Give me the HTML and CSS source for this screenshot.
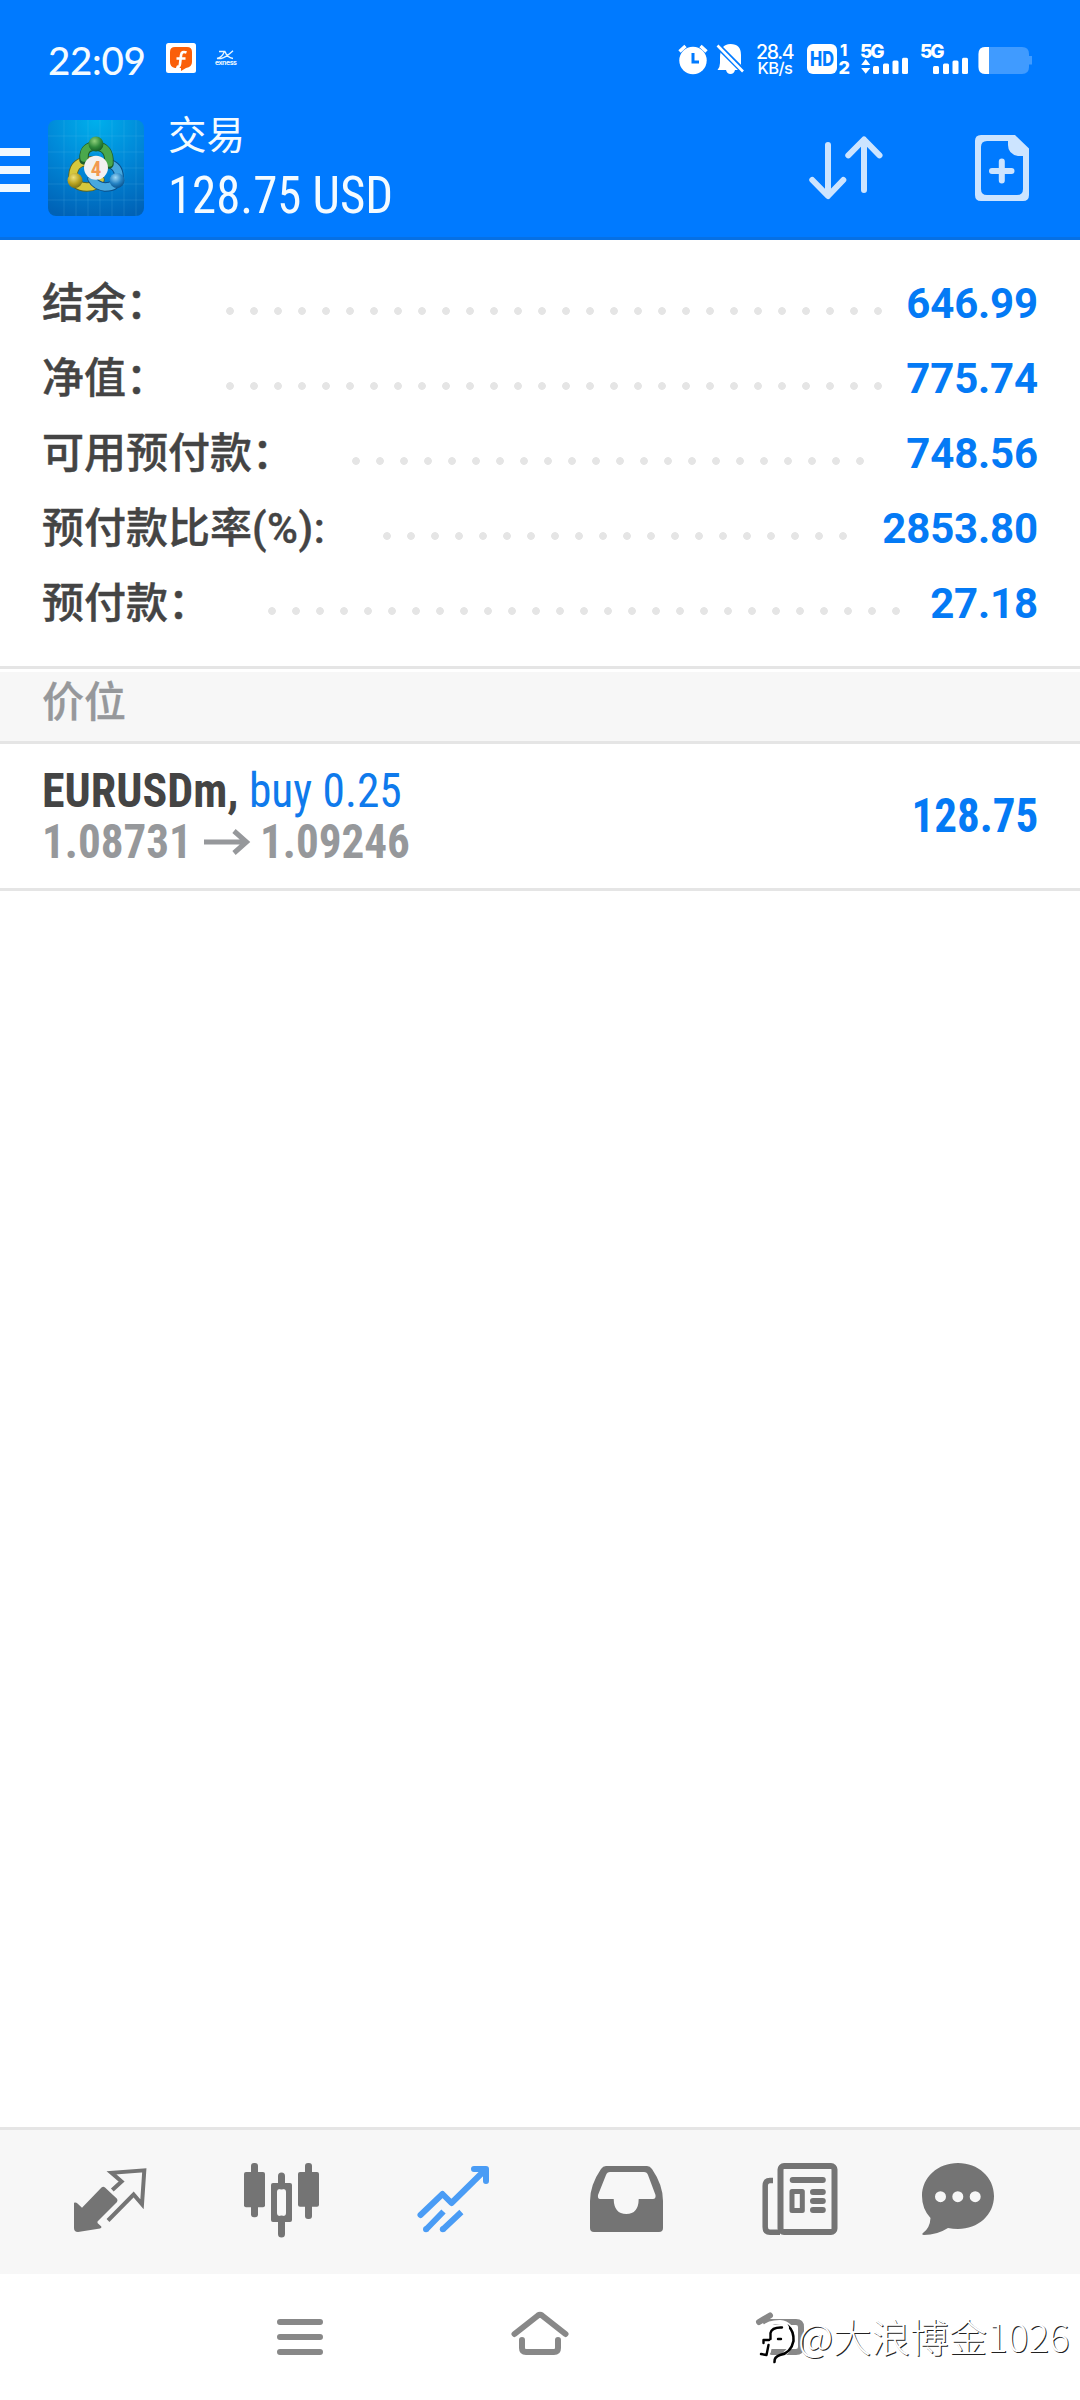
FILE: index.html
```
<!DOCTYPE html>
<html lang="zh-CN">
<head>
<meta charset="utf-8">
<title>交易</title>
<link rel="stylesheet" href="styles.css">
</head>
<body>
<div class="screen">
  <header class="header">
    <div class="status">
      <span class="clock">22:09</span>
      <svg class="app-badge" width="30" height="30" viewBox="0 0 30 30">
        <rect width="30" height="30" rx="2.500" fill="#fff"/>
        <path d="M9 4H21Q26 4 26 9V19Q26 24 20 25L15 28V25H9Q4 24 4 19V9Q4 4 9 4Z" fill="#fa5f0a"/>
        <path d="M20.500 9.500Q15.500 7.500 15 12.500L14 21Q13.500 25 10.500 23.500M10.500 15.500H19.500" fill="none" stroke="#fff" stroke-width="2.600"/>
      </svg>
      <svg class="exness" width="24" height="18" viewBox="0 0 24 18">
        <path d="M5 1.500H10.500Q8 7.500 3 8.500H7Q12 7.500 19 .8M11 1.500Q13 7.500 19 8.500" fill="none" stroke="#e8f6ff" stroke-width="1.300"/>
        <text x="1" y="15" textLength="22" class="exness-text">exness</text>
      </svg>
      <div class="status-icons">
        <svg width="38" height="36" viewBox="676 42 38 36" fill="#fff">
          <circle cx="693" cy="60.500" r="13.700"/>
          <path d="M679.500 51.500L685.500 46M706.500 51.500L700.500 46" stroke="#fff" stroke-width="3.400"/>
          <path d="M693 53V62H699" fill="none" stroke="#007aff" stroke-width="3"/>
        </svg>
        <svg width="38" height="36" viewBox="714 42 38 36">
          <path d="M720 58Q720 44 730.500 44Q741 44 741 55V65L744 70H735Q734 74 730.500 74Q727 74 726 70H717.500Q720 67 720 63Z" fill="#fff"/>
          <path d="M716.500 44.500L744 72" stroke="#007aff" stroke-width="6"/>
          <path d="M717.500 45.500L743 71.500" stroke="#fff" stroke-width="2.600"/>
        </svg>
        <svg width="50" height="36" viewBox="752 42 50 36" fill="#fff" class="net">
          <text x="756" y="58.500" font-size="19.500" textLength="38.500">28.4</text>
          <text x="757.500" y="74.300" font-size="16.500" textLength="35.500">KB/s</text>
        </svg>
        <svg width="54" height="36" viewBox="802 42 54 36" class="hd">
          <rect x="807" y="44" width="30" height="30" rx="6" fill="#fff"/>
          <text x="810" y="66" font-size="19.500" textLength="24" lengthAdjust="spacingAndGlyphs" fill="#007aff">HD</text>
          <text x="840" y="56" font-size="16.500" fill="#fff">1</text>
          <text x="838.500" y="73.800" font-size="18" fill="#fff">2</text>
        </svg>
        <svg width="60" height="36" viewBox="856 42 60 36" fill="#fff" class="hd">
          <text x="860" y="58" font-size="19" textLength="24.500">5G</text>
          <path d="M865.700 59L870.300 65H861.200ZM865.700 73.800L870.300 68H861.200Z"/>
          <rect x="873" y="66" width="6" height="8" rx="1.500"/><rect x="883" y="63.500" width="6" height="10.500" rx="1.500"/>
          <rect x="892.500" y="60.500" width="6" height="13.500" rx="1.500"/><rect x="902" y="57.700" width="6" height="16.300" rx="1.500"/>
        </svg>
        <svg width="58" height="36" viewBox="916 42 58 36" fill="#fff" class="hd">
          <text x="920" y="58" font-size="19" textLength="24.500">5G</text>
          <rect x="933" y="66" width="6" height="8" rx="1.500"/><rect x="943" y="63.500" width="6" height="10.500" rx="1.500"/>
          <rect x="952.500" y="60.500" width="6" height="13.500" rx="1.500"/><rect x="962" y="57.700" width="6" height="16.300" rx="1.500"/>
        </svg>
        <svg width="60" height="36" viewBox="974 42 60 36">
          <path d="M985 47H1022Q1029 47 1029 54V56H1032V64.500H1029V67Q1029 74 1022 74H985Q978.500 74 978.500 67V54Q978.500 47 985 47Z" fill="#409bff"/>
          <path d="M989 47V74H985Q978.500 74 978.500 67V54Q978.500 47 985 47Z" fill="#fff"/>
        </svg>
      </div>
    </div>
    <div class="appbar">
      <div class="menu"><i></i><i></i><i></i></div>
      <svg class="logo" width="96" height="96" viewBox="0 0 96 96">
        <defs>
          <radialGradient id="bg" cx=".5" cy="0" r="1.050"><stop offset="0" stop-color="#00b0ec"/><stop offset=".5" stop-color="#0088d8"/><stop offset="1" stop-color="#0062b6"/></radialGradient>
          <radialGradient id="gr" cx=".4" cy=".3" r=".7"><stop offset="0" stop-color="#8fd07a"/><stop offset=".6" stop-color="#2f8a3c"/><stop offset="1" stop-color="#176028"/></radialGradient>
          <radialGradient id="ye" cx=".4" cy=".3" r=".7"><stop offset="0" stop-color="#f0e27a"/><stop offset=".6" stop-color="#b8a220"/><stop offset="1" stop-color="#7d7418"/></radialGradient>
          <radialGradient id="bl" cx=".4" cy=".3" r=".7"><stop offset="0" stop-color="#9fd8f5"/><stop offset=".6" stop-color="#2583c4"/><stop offset="1" stop-color="#0c5590"/></radialGradient>
        </defs>
        <rect width="96" height="96" rx="8" fill="url(#bg)"/>
        <path d="M16 0V96M28 0V96M40 0V96M52 0V96M64 0V96M76 0V96M88 0V96M0 16H96M0 32H96M0 48H96M0 64H96M0 80H96" stroke="#6fd0f5" stroke-opacity=".16"/>
        <g fill="none" stroke-linecap="round">
          <path d="M44 41Q26 40 25 55Q26 67 39 67Q49 67 52 60" stroke="#5c6420" stroke-width="9.500"/>
          <path d="M44 41Q26 40 25 55Q26 67 39 67Q49 67 52 60" stroke="#d6c83c" stroke-width="7.500"/>
          <path d="M60 43Q71 46 71 57Q69 67 57 67Q48 66 44 59" stroke="#0b4f88" stroke-width="9.500"/>
          <path d="M60 43Q71 46 71 57Q69 67 57 67Q48 66 44 59" stroke="#48a8de" stroke-width="7.500"/>
          <path d="M36 40Q35 26 48 26Q62 27 61 44" stroke="#1d5c2a" stroke-width="9.500"/>
          <path d="M36 38Q35 26 48 26Q62 27 61 43" stroke="#4aa84c" stroke-width="7.500"/>
        </g>
        <circle cx="48" cy="24" r="7.500" fill="url(#gr)"/>
        <circle cx="27" cy="60.500" r="7.500" fill="url(#ye)"/>
        <circle cx="69" cy="60.500" r="7.500" fill="url(#bl)"/>
        <circle cx="48" cy="47.700" r="12" fill="#f3f1f1"/>
        <text x="48" y="55.500" class="logo-num">4</text>
      </svg>
      <div class="titles">
        <div class="title">交易</div>
        <div class="total">128.75 USD</div>
      </div>
      <svg class="sort" width="84" height="84" viewBox="804 126 84 84" fill="none" stroke="#cce4ff" stroke-width="6" stroke-linecap="round" stroke-linejoin="round">
        <path d="M828 145V195M812.300 180L828 196L843.300 180M864 190V140M848.300 155.300L864 139.500L879.500 155.300"/>
      </svg>
      <svg class="new-order" width="60" height="72" viewBox="972 132 60 72">
        <path fill="#cce4ff" fill-rule="evenodd" d="M981 135H1015L1029 148.500V195Q1029 201 1023 201H981Q975 201 975 195V141Q975 135 981 135ZM987 141Q981 141 981 147V189Q981 195 987 195H1017Q1023 195 1023 189V156H1018Q1008 154 1008 145V141Z"/>
        <path d="M992 171H1011.500M1001.800 161.500V180.500" stroke="#cce4ff" stroke-width="6" stroke-linecap="round"/>
      </svg>
    </div>
  </header>

  <section class="summary">
    <div class="row"><span class="label">结余：</span><span class="dots" style="width:672px"></span><span class="num">646.99</span></div>
    <div class="row"><span class="label">净值：</span><span class="dots" style="width:672px"></span><span class="num">775.74</span></div>
    <div class="row"><span class="label">可用预付款：</span><span class="dots" style="width:528px"></span><span class="num">748.56</span></div>
    <div class="row"><span class="label">预付款比率<span class="unit">(%):</span></span><span class="dots" style="width:480px"></span><span class="num">2853.80</span></div>
    <div class="row"><span class="label">预付款：</span><span class="dots" style="width:648px"></span><span class="num">27.18</span></div>
  </section>

  <h2 class="section">价位</h2>

  <main class="positions">
    <div class="position">
      <div>
        <div class="line"><b class="symbol">EURUSDm,</b><span class="side">buy 0.25</span></div>
        <div class="line prices"><b>1.08731</b>
          <svg width="48" height="28" viewBox="0 0 48 28" fill="none" stroke="#96989b" stroke-width="5"><path d="M0 14H43M30 3L42.500 14L30 25"/></svg>
          <b>1.09246</b></div>
      </div>
      <b class="profit">128.75</b>
    </div>
  </main>

  <nav class="tabs">
    <svg viewBox="0 0 100 100" fill="#747474">
      <path d="M14 50.700Q16 50 17.500 51.500L22 55.700L41.500 35.500Q43.300 34 45 35.500L57 46.800Q58 48.300 57 50L37.500 69.500V71L41.300 74.500Q42 76 40 76.500L18 80Q14 80 14 76Z"/>
      <path d="M52.300 38L61.600 29.500L51.500 20.800L84.300 18.300L82 52.300L73.600 42.500L48 68.500" fill="none" stroke="#747474" stroke-width="4"/>
    </svg>
    <svg viewBox="0 0 100 100" fill="#747474">
      <rect x="12" y="20" width="21" height="35.300" rx="2"/><rect x="19" y="11" width="7" height="54.300" rx="3"/>
      <path fill-rule="evenodd" d="M41 31H58Q60 31 60 33V68Q60 70 58 70H41Q39 70 39 68V33Q39 31 41 31ZM48 37Q45 37 45 40V61Q45 64 48 64H51Q54 64 54 61V40Q54 37 51 37Z"/>
      <path d="M49.500 24V34M49.500 67V82" stroke="#747474" stroke-width="7" stroke-linecap="round"/>
      <rect x="66" y="20" width="21" height="34.700" rx="2"/><rect x="73" y="11" width="7" height="56" rx="3"/>
    </svg>
    <svg viewBox="0 0 100 100" fill="none" stroke="#4a9cf5" stroke-width="6">
      <path d="M16.500 63L38.500 42L47.500 51L81 18M70 17H82V29" stroke-linecap="round" stroke-linejoin="round"/>
      <path d="M22 77.500L39.500 59.500M38.800 77.500L57.400 60"/><g fill="#4a9cf5" stroke="none"><circle cx="22" cy="77.300" r="3"/><circle cx="38.800" cy="77.300" r="3"/></g>
    </svg>
    <svg viewBox="0 0 100 100" fill="#747474">
      <path fill-rule="evenodd" d="M30 14H71Q74 14 76 17Q87 33 87 49V76Q87 80 83 80H18Q14 80 14 76V49Q14 33 25 17Q27 14 30 14ZM34 20Q31 20 30 23L22 43Q21.500 47 24 47H37.700Q38 62 50.300 62Q62.500 62 62.700 47H77Q80 47 79.500 43L72 23Q71 20 68 20Z"/>
    </svg>
    <svg viewBox="0 0 100 100" fill="none" stroke="#747474">
      <rect x="32.500" y="14" width="54" height="66" rx="3.500" stroke-width="6"/>
      <path d="M25 28.500H22Q17.200 28.500 17.200 34V75Q17.200 80.300 22 80.300H32" stroke-width="5.500"/>
      <path d="M44.700 28H74.800" stroke-width="6" stroke-linecap="round"/>
      <rect x="44" y="39.500" width="10.300" height="19" stroke-width="5" stroke-linejoin="round"/>
      <path d="M65 40H74.800M65 49H74.800M65 58H74.800" stroke-width="6" stroke-linecap="round"/>
    </svg>
    <svg viewBox="0 0 100 100" fill="#747474">
      <path fill-rule="evenodd" d="M38 11C58 11 74 25 74 44C74 63 58 77 38 77Q33 77 28 76Q17 83 4 83Q1 82.500 3 81Q10 76 10.500 66Q2 57 2 44C2 25 18 11 38 11ZM20.500 39.200A5.500 5.500 0 1 0 20.500 50.200A5.500 5.500 0 1 0 20.500 39.200ZM37.800 39.200A5.500 5.500 0 1 0 37.800 50.200A5.500 5.500 0 1 0 37.800 39.200ZM55.200 39.200A5.500 5.500 0 1 0 55.200 50.200A5.500 5.500 0 1 0 55.200 39.200Z"/>
    </svg>
  </nav>

  <footer class="sysnav">
    <svg width="72" height="60" viewBox="264 2304 72 60"><path d="M280 2322H320M280 2337H320M280 2352H320"/></svg>
    <svg width="72" height="60" viewBox="504 2304 72 60"><path d="M514.500 2334L538 2315.500Q540 2314 542 2315.500L565.500 2334M522 2340V2348Q522 2352 526 2352H554Q558 2352 558 2348V2340"/></svg>
    <svg width="72" height="60" viewBox="744 2304 72 60"><path d="M759 2322L770 2315.500M766 2322H796Q801 2322 801 2327V2347Q801 2352 796 2352H772"/></svg>
    <div class="watermark">
      <svg width="42" height="50" viewBox="758 2314 42 50" fill="none">
        <path d="M762 2330Q766 2322 780 2322Q792.500 2323 792.500 2337Q792 2352 777 2358" stroke="#fff" stroke-width="4"/>
        <path d="M788 2326Q794 2331 793.500 2341Q791 2353 780 2355Q774 2357 774.500 2362" stroke="#000" stroke-width="2.600"/>
        <path d="M785 2328Q772 2327 770 2335L767 2351L762 2356" stroke="#fff" stroke-width="8"/>
        <path d="M782 2327.500Q772 2327 770.500 2333V2339M769 2340H763.500V2343M768.500 2345L766.500 2355L761 2354M778 2339H781" stroke="#000" stroke-width="2.400"/>
      </svg>
      <span>@大浪博金1026</span>
    </div>
  </footer>
</div>
</body>
</html>
```
FILE: styles.css
```
* { box-sizing: border-box; }
body {
  margin: 0;
  background: #fff;
  font-family: Roboto, "Noto Sans CJK SC", sans-serif;
}
svg { display: block; flex: none; overflow: visible; }

.screen {
  width: 1080px;
  height: 2400px;
  display: flex;
  flex-direction: column;
  position: relative;
  overflow: hidden;
}

/* header */
.header {
  height: 240px;
  flex: none;
  background: #007aff;
  border-bottom: 3px solid #0670e4;
  color: #f4fbff;
}
.status {
  height: 96px;
  padding: 24px 46px 0 48px;
  display: flex;
  align-items: flex-start;
}
.clock {
  width: 118px;
  font: 500 38.500px/72px Lato, sans-serif;
  letter-spacing: -0.300px;
}
.app-badge { margin-top: 19px; }
.exness { margin: 26px 0 0 18px; }
.exness-text { font: 700 7px Inter, sans-serif; fill: #e8f6ff; }
.status-icons { display: flex; margin: 18px 0 0 auto; }
.net { font-family: Inter, sans-serif; font-weight: 500; }
.hd { font-family: Inter, sans-serif; font-weight: 800; }

.appbar {
  height: 144px;
  display: flex;
  align-items: center;
}
.menu {
  width: 30px;
  padding-top: 4px;
  display: grid;
  gap: 10px;
}
.menu i { height: 8px; background: #f0f9ff; }
.logo { margin-left: 18px; }
.logo-num {
  font: 700 21px "Roboto Condensed", sans-serif;
  fill: #f2994f;
  text-anchor: middle;
}
.titles { margin: -3px 0 0 24px; width: 636px; }
.title { font-size: 38.500px; line-height: 59px; }
.total {
  font-family: "Roboto Condensed", sans-serif;
  font-size: 51px;
  line-height: 62px;
  transform: scaleX(.957);
  transform-origin: left;
}
.new-order { margin-left: 84px; }

/* account summary */
.summary { padding: 26px 42px 25px; flex: none; }
.row {
  height: 75px;
  line-height: 75px;
  font-size: 42px;
  display: flex;
  white-space: nowrap;
}
.label { color: #444; font-weight: 500; -webkit-text-stroke: .4px #444; }
.unit { letter-spacing: .5px; }
.dots {
  height: 24px;
  margin: 33px auto 0 50px;
  background: radial-gradient(circle, #e5e5e5 3.500px, transparent 4.200px) 0 0 / 24px 24px;
}
.num { color: #047af5; font-weight: 700; letter-spacing: -.15px; }

.section {
  margin: 0;
  height: 78px;
  flex: none;
  padding-left: 42px;
  border-top: 3px solid #e5e5e5;
  border-bottom: 3px solid #e5e5e5;
  background: linear-gradient(#fff 3px, #f7f7f7 3px);
  color: #96989b;
  font-size: 42px;
  font-weight: 500;
  line-height: 67px;
  -webkit-text-stroke: .3px #96989b;
}

/* open positions */
.positions { flex: 1; font-family: "Roboto Condensed", sans-serif; font-size: 48px; }
.position {
  height: 147px;
  padding: 0 42px;
  border-bottom: 3px solid #e5e5e5;
  display: flex;
  justify-content: space-between;
  align-items: center;
}
.line { display: flex; align-items: center; height: 51px; line-height: 51px; }
.symbol, .side, .prices b { display: block; transform-origin: left; }
.symbol { width: 207px; color: #444; transform: scaleX(.957); }
.side { color: #0f7aec; transform: scaleX(.945); }
.prices { color: #96989b; }
.prices b { width: 162px; transform: scaleX(.94); }
.prices svg { margin-right: 8px; }
.profit { color: #047af5; margin-top: -2px; transform: scaleX(.938); transform-origin: right; }

/* bottom bars */
.tabs {
  height: 147px;
  flex: none;
  padding: 22px 0 0 24px;
  border-top: 3px solid #e5e5e5;
  background: #f7f7f7;
  display: grid;
  grid-template-columns: repeat(6, 172px);
}
.tabs svg { width: 100px; height: 100px; margin-left: 36px; }
.sysnav {
  height: 126px;
  flex: none;
  padding: 30px 0 0 264px;
  display: flex;
  gap: 168px;
  fill: none;
  stroke: #888;
  stroke-width: 6;
  stroke-linecap: round;
  stroke-linejoin: round;
}
.watermark {
  position: absolute;
  left: 758px;
  bottom: 36px;
  display: flex;
  align-items: center;
  color: #fff;
  font: 300 38.500px/50px "Noto Sans CJK SC", sans-serif;
  text-shadow: 1px 1px 0 #222;
  white-space: nowrap;
}
.watermark span { margin: -8px 0 0 -2px; }
```
